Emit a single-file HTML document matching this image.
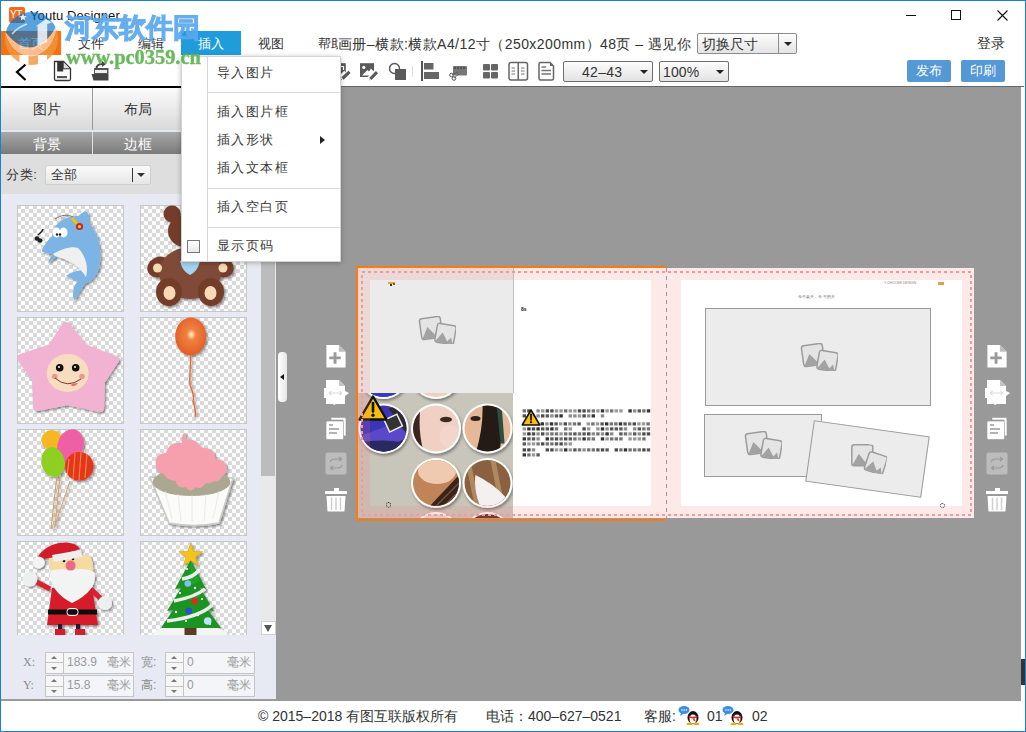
<!DOCTYPE html>
<html><head><meta charset="utf-8">
<style>
*{margin:0;padding:0;box-sizing:border-box}
html,body{width:1026px;height:732px;overflow:hidden;background:#fff}
body{position:relative;font-family:"Liberation Sans",sans-serif;color:#333;font-size:13px}
.a{position:absolute}
.t{position:absolute;white-space:nowrap;line-height:1}
.ck{width:107px;height:107px;border:1px solid #c8c8c8;background:repeating-conic-gradient(#d9d9d9 0 25%,#fff 0 50%) -5px -1px/8px 8px}
.sp{width:19px;height:22px;border:1px solid #c4c4c4;background:linear-gradient(#f6f6f6 0 9.5px,#c4c4c4 9.5px 10.5px,#f6f6f6 10.5px)}
.sp:before{content:"";position:absolute;left:5px;top:3px;border-left:3.5px solid transparent;border-right:3.5px solid transparent;border-bottom:3.5px solid #777}
.sp:after{content:"";position:absolute;left:5px;top:14px;border-left:3.5px solid transparent;border-right:3.5px solid transparent;border-top:3.5px solid #777}
.circ{width:50px;height:50px;border-radius:50%;border:2.5px solid #fff;box-shadow:1px 2px 3px rgba(0,0,0,0.35)}
.tx{color:#000;font-weight:bold;-webkit-text-stroke:0.3px #000;word-break:break-all;overflow:hidden}
.fld{width:71px;height:22px;border:1px solid #c4c4c4;background:#f4f5f8}
</style></head><body>

<!-- window border -->
<div class="a" style="left:0;top:0;width:1026px;height:732px;border:1px solid #1c7fd6;z-index:50;pointer-events:none"></div>

<!-- title bar -->
<div class="a" style="left:9px;top:7px;width:16px;height:16px;background:#f26b1d;border-radius:2px"></div>
<div class="t" style="left:10px;top:10px;font-size:10px;color:#fff;letter-spacing:-0.5px">YT</div>
<div class="t" style="left:30px;top:9px;font-size:13px;color:#111;letter-spacing:0.1px">Youtu Designer</div>
<div class="a" style="left:906px;top:15px;width:10px;height:1px;background:#111"></div>
<div class="a" style="left:951px;top:10px;width:10px;height:10px;border:1px solid #111"></div>
<svg class="a" style="left:997px;top:10px" width="11" height="11"><path d="M0.5 0.5L10.5 10.5M10.5 0.5L0.5 10.5" stroke="#111" stroke-width="1.1"/></svg>

<!-- menu tabs -->
<div class="a" style="left:1px;top:31px;width:60px;height:24px;background:#f8700f"></div>
<div class="t" style="left:18px;top:37px;font-size:13px;color:#fff">首页</div>
<div class="t" style="left:78px;top:37px;font-size:13px;color:#333">文件</div>
<div class="t" style="left:138px;top:37px;font-size:13px;color:#333">编辑</div>
<div class="a" style="left:181px;top:31px;width:60px;height:24px;background:#219cdb"></div>
<div class="t" style="left:198px;top:37px;font-size:13px;color:#fff">插入</div>
<div class="t" style="left:258px;top:37px;font-size:13px;color:#333">视图</div>
<div class="t" style="left:318px;top:37px;font-size:13px;color:#333">帮助</div>
<div class="t" style="left:338px;top:37px;font-size:14px;letter-spacing:0.43px;color:#333;background:#fff">画册–横款:横款A4/12寸（250x200mm）48页 – 遇见你</div>

<!-- size dropdown -->
<div class="a" style="left:697px;top:33px;width:100px;height:21px;border:1px solid #8c8c8c;border-radius:2px;background:linear-gradient(#fdfdfd,#e4e4e4)"></div>
<div class="a" style="left:778px;top:34px;width:1px;height:19px;background:#8c8c8c"></div>
<div class="t" style="left:702px;top:37px;font-size:14px;color:#333">切换尺寸</div>
<div class="a" style="left:784px;top:42px;width:0;height:0;border-left:4px solid transparent;border-right:4px solid transparent;border-top:4px solid #222"></div>
<div class="t" style="left:977px;top:36px;font-size:14px;color:#333">登录</div>

<!-- toolbar -->
<div class="a" style="left:907px;top:60px;width:44px;height:22px;background:#5598d6;border-radius:2px"></div>
<div class="t" style="left:916px;top:64px;font-size:13px;color:#fff">发布</div>
<div class="a" style="left:961px;top:60px;width:44px;height:22px;background:#5598d6;border-radius:2px"></div>
<div class="t" style="left:970px;top:64px;font-size:13px;color:#fff">印刷</div>

<svg class="a" style="left:0;top:56px" width="740" height="30">
 <path d="M25.5 8.5 L17 16 L25.5 24" stroke="#000" stroke-width="2.2" fill="none"/>
 <path d="M54.5 5.5 H63.5 L70.5 12.5 V23 Q70.5 24.5 69 24.5 H56 Q54.5 24.5 54.5 23 Z" fill="#fff" stroke="#333" stroke-width="1.3"/>
 <rect x="57.2" y="6" width="6" height="9.5" fill="#333"/><path d="M63.2 6 V12.8 H70 Z" fill="#ddd"/><path d="M63.2 6 V12.8 H70" fill="none" stroke="#333" stroke-width="1"/>
 <rect x="57" y="20" width="10" height="2.2" fill="#555"/>
 <path d="M91.5 18 H108.5 V24.5 H93.5 Z" fill="#444"/><path d="M94 12 H108.5 V18 H94Z" fill="#555"/><path d="M95 14 H107 V17 H95Z" fill="#eee"/>
 <path d="M96.5 13 Q96 8 103 8" stroke="#444" stroke-width="2" fill="none"/><path d="M102 5 L106 8 L102 11Z" fill="#444"/>
 <rect x="341" y="7.2" width="4.8" height="12.5" fill="#5a5a5a"/><path d="M341 10.5 H343.5 V14" stroke="#fff" stroke-width="1.2" fill="none"/>
 <path d="M340.5 22 L346 16.5" stroke="#fff" stroke-width="5"/><path d="M342.5 22.5 L349.5 15.8" stroke="#5a5a5a" stroke-width="3.2"/><path d="M342.2 23.5 L341 24 L341.6 22.6Z" fill="#5a5a5a"/>
 <rect x="360" y="7.2" width="14" height="13.8" fill="#5a5a5a"/><circle cx="363.8" cy="11.4" r="1.6" fill="#fff"/>
 <path d="M362 19.6 L367.5 14 L369 15.5 L371 12.5 L373.6 15.6 V19.6Z" fill="#fff"/>
 <path d="M368 24.5 L377.5 15" stroke="#fff" stroke-width="5.5"/><path d="M370.3 23 L377 16.2" stroke="#5a5a5a" stroke-width="3.2"/><path d="M370 24 L369 24.6 L369.4 23.3Z" fill="#5a5a5a"/>
 <circle cx="394.5" cy="12.5" r="5" fill="none" stroke="#555" stroke-width="1.4"/><rect x="395" y="13" width="11" height="11" fill="#5a5a5a"/>
 <rect x="412" y="10" width="1" height="11" fill="#ddd"/>
 <rect x="421" y="5" width="2" height="20" fill="#555"/><rect x="424" y="7" width="9.5" height="6.5" fill="#666"/><rect x="424" y="16" width="15" height="7" fill="#666"/>
 <rect x="453" y="10" width="14" height="9.5" rx="1" fill="#777"/><path d="M454 12 H466" stroke="#333" stroke-width="1" stroke-dasharray="2 1"/>
 <circle cx="451.5" cy="19" r="1.8" fill="none" stroke="#555" stroke-width="1"/><circle cx="454" cy="22.5" r="1.8" fill="none" stroke="#555" stroke-width="1"/><path d="M452 19 L458 16 M454 22 L459 18" stroke="#555" stroke-width="0.8"/>
 <rect x="483" y="8" width="7" height="6.5" rx="1" fill="#666"/><rect x="491" y="8" width="7" height="6.5" rx="1" fill="#666"/><rect x="483" y="16" width="7" height="6.5" rx="1" fill="#666"/><rect x="491" y="16" width="7" height="6.5" rx="1" fill="#666"/>
 <rect x="509" y="6.5" width="18.5" height="17.5" rx="2" fill="none" stroke="#666" stroke-width="1.5"/><rect x="517.5" y="6.5" width="1.5" height="17.5" fill="#666"/>
 <path d="M511.5 12 H515 M511.5 15 H515 M511.5 18 H515 M521 12 H524.5 M521 15 H524.5 M521 18 H524.5" stroke="#777" stroke-width="1.2"/>
 <path d="M539 8 Q539 6.5 540.5 6.5 H550 L553.5 10 V22.5 Q553.5 24 552 24 H540.5 Q539 24 539 22.5Z" fill="none" stroke="#666" stroke-width="1.5"/><path d="M550 6.5 L553.5 10 H550Z" fill="#666"/>
 <path d="M541.5 11 H546 M541.5 14.5 H551 M541.5 18 H551" stroke="#777" stroke-width="1.3"/>
</svg>
<div class="a" style="left:563px;top:61px;width:90px;height:21px;border:1px solid #6e6e6e;border-radius:2px;background:linear-gradient(#fdfdfd,#e2e2e2)"></div>
<div class="t" style="left:582px;top:65px;font-size:14px;color:#333;letter-spacing:0.3px">42–43</div>
<div class="a" style="left:640px;top:70px;width:0;height:0;border-left:4px solid transparent;border-right:4px solid transparent;border-top:4px solid #222"></div>
<div class="a" style="left:659px;top:61px;width:70px;height:21px;border:1px solid #6e6e6e;border-radius:2px;background:linear-gradient(#fdfdfd,#e2e2e2)"></div>
<div class="t" style="left:663px;top:65px;font-size:14px;color:#333;letter-spacing:0.1px">100%</div>
<div class="a" style="left:716px;top:70px;width:0;height:0;border-left:4px solid transparent;border-right:4px solid transparent;border-top:4px solid #222"></div>

<!-- canvas -->
<div class="a" style="left:276px;top:86px;width:745px;height:615px;background:#999;border-top:1px solid #666"></div>
<div class="a" style="left:1021px;top:87px;width:4px;height:614px;background:#fff"></div>
<div class="a" style="left:1021px;top:86px;width:3px;height:1px;background:#666"></div>
<div class="a" style="left:1021px;top:659px;width:4px;height:26px;background:#333"></div>
<svg width="0" height="0" style="position:absolute">
 <defs>
  <symbol id="ph" viewBox="-20 -14 40 28">
   <g transform="translate(-5,-2) rotate(-8)"><rect x="-10.5" y="-10.5" width="21" height="21" rx="2.5" fill="#e4e4e4" stroke="#9c9c9c" stroke-width="1.5"/><path d="M-10 10 L-3.5 -1.5 L3 7 L5 3 L10 10Z" fill="#a2a2a2"/></g>
   <g transform="translate(9.5,4) rotate(10)"><rect x="-9.5" y="-9.5" width="19" height="19" rx="2.5" fill="#e4e4e4" stroke="#9c9c9c" stroke-width="1.5"/><path d="M-9 9 L-3 -1 L3 7 L6 2.5 L9 9Z" fill="#a2a2a2"/></g>
  </symbol>
  <symbol id="warn" viewBox="0 0 30 26">
   <path d="M15 1.5 L28.5 24.5 L1.5 24.5 Z" fill="#f6bf0a" stroke="#111" stroke-width="2.4" stroke-linejoin="round"/>
   <path d="M15 8 L15 16.5" stroke="#111" stroke-width="2.6" stroke-linecap="round"/>
   <circle cx="15" cy="20.2" r="1.7" fill="#111"/>
  </symbol>
  <symbol id="ic-add" viewBox="0 0 22 25">
   <path d="M1 1 H14 L21 8 V24.5 H1 Z" fill="#fff"/><path d="M14 1 L21 8 H14Z" fill="#bdbdbd"/>
   <path d="M10 8.5 V20.5 M4 14.5 H16" stroke="#999" stroke-width="3"/>
  </symbol>
  <symbol id="ic-move" viewBox="0 0 28 26">
   <path d="M3 1 H16 L22 7 V12 L26 14 L22 17 V25 H13 L11 26 L10 25 H3 V19 H1 V9 H3 Z" fill="#fff"/><path d="M16 1 L22 7 H16Z" fill="#c4c4c4"/>
   <path d="M6 14 H19 M6 14 L8.5 12 M6 14 L8.5 16 M19 14 L16.5 12 M19 14 L16.5 16" stroke="#dcdcdc" stroke-width="1.2"/>
  </symbol>
  <symbol id="ic-copy" viewBox="0 0 22 24">
   <path d="M6 1.5 H19.5 Q21 1.5 21 3 V19 Q21 20 20 20 H18 V4 H6Z" fill="#fff" stroke="#999" stroke-width="0.6"/>
   <rect x="1" y="5" width="17.5" height="18.5" rx="1.5" fill="#fff" stroke="#999" stroke-width="0.6"/>
   <path d="M4 9 H8 M4 13 H14 M4 17 H12" stroke="#9a9a9a" stroke-width="1.4"/>
  </symbol>
  <symbol id="ic-swap" viewBox="0 0 22 23">
   <rect x="0.5" y="0.5" width="21" height="22" rx="2" fill="#bcbcbc"/>
   <path d="M5 10 Q6 7 10 7 H16 M14 5 L16.5 7 L14 9 M17 13 Q16 16 12 16 H6 M8 14 L5.5 16 L8 18" stroke="#999" stroke-width="1.2" fill="none"/>
  </symbol>
  <symbol id="ic-trash" viewBox="0 0 22 24">
   <rect x="9" y="0" width="5" height="3.5" fill="#fff"/><rect x="0" y="3" width="22" height="3" fill="#fff"/>
   <path d="M1.5 8 H20.5 L19.5 23.5 H2.5Z" fill="#fff"/>
   <path d="M6.5 9.5 V22 M11 9.5 V22 M15.5 9.5 V22" stroke="#cfcfcf" stroke-width="1.5"/>
  </symbol>
 </defs>
</svg>
<!-- collapse handle -->
<div class="a" style="left:278px;top:352px;width:9px;height:50px;background:linear-gradient(90deg,#fff,#e6e6e6);border-radius:4px"></div>
<div class="a" style="left:280px;top:374px;width:0;height:0;border-top:3.5px solid transparent;border-bottom:3.5px solid transparent;border-right:4px solid #111"></div>
<!-- side icons -->
<svg class="a" style="left:325px;top:344px" width="22" height="24"><use href="#ic-add"/></svg>
<svg class="a" style="left:323px;top:379px" width="28" height="26"><use href="#ic-move"/></svg>
<svg class="a" style="left:325px;top:416px" width="22" height="24"><use href="#ic-copy"/></svg>
<svg class="a" style="left:325px;top:452px" width="22" height="23"><use href="#ic-swap"/></svg>
<svg class="a" style="left:325px;top:488px" width="22" height="24"><use href="#ic-trash"/></svg>
<svg class="a" style="left:986px;top:344px" width="22" height="24"><use href="#ic-add"/></svg>
<svg class="a" style="left:984px;top:379px" width="28" height="26"><use href="#ic-move"/></svg>
<svg class="a" style="left:986px;top:416px" width="22" height="24"><use href="#ic-copy"/></svg>
<svg class="a" style="left:986px;top:452px" width="22" height="23"><use href="#ic-swap"/></svg>
<svg class="a" style="left:986px;top:488px" width="22" height="24"><use href="#ic-trash"/></svg>

<!-- spread -->
<div class="a" style="left:358px;top:268px;width:616px;height:250px;background:#fff"></div>
<!-- left page content -->
<svg class="a" style="left:358px;top:393px" width="155" height="125"><defs><filter id="csh" x="-30%" y="-30%" width="160%" height="160%"><feDropShadow dx="1" dy="2" stdDeviation="1.6" flood-color="#000" flood-opacity="0.4"/></filter><clipPath id="cc0"><circle cx="25.5" cy="-19" r="23"/></clipPath><clipPath id="cc1"><circle cx="78" cy="-19" r="23"/></clipPath><clipPath id="cc2"><circle cx="25.5" cy="35.5" r="23"/></clipPath><clipPath id="cc3"><circle cx="78" cy="35.5" r="23"/></clipPath><clipPath id="cc4"><circle cx="129.5" cy="35.5" r="23"/></clipPath><clipPath id="cc5"><circle cx="78" cy="90" r="23"/></clipPath><clipPath id="cc6"><circle cx="129.5" cy="90" r="23"/></clipPath><clipPath id="cc7"><circle cx="78" cy="144" r="23"/></clipPath><clipPath id="cc8"><circle cx="129.5" cy="144" r="23"/></clipPath></defs><rect width="155" height="125" fill="#c8c5bb"/><circle cx="25.5" cy="-19" r="25" fill="#fff" filter="url(#csh)"/><circle cx="78" cy="-19" r="25" fill="#fff" filter="url(#csh)"/><circle cx="25.5" cy="35.5" r="25" fill="#fff" filter="url(#csh)"/><circle cx="78" cy="35.5" r="25" fill="#fff" filter="url(#csh)"/><circle cx="129.5" cy="35.5" r="25" fill="#fff" filter="url(#csh)"/><circle cx="78" cy="90" r="25" fill="#fff" filter="url(#csh)"/><circle cx="129.5" cy="90" r="25" fill="#fff" filter="url(#csh)"/><circle cx="78" cy="144" r="25" fill="#fff" filter="url(#csh)"/><circle cx="129.5" cy="144" r="25" fill="#fff" filter="url(#csh)"/><g clip-path="url(#cc0)"><rect x="0.5" y="-44" width="50" height="50" fill="#2a2a70"/><rect x="0.5" y="-9" width="50" height="15" fill="#3a3ab8"/></g><g clip-path="url(#cc1)"><rect x="53" y="-44" width="50" height="50" fill="#ecd0c0"/></g><g clip-path="url(#cc2)"><rect x="0.5" y="10.5" width="50" height="50" fill="#3b35b8"/><path d="M0.5 43.5 L35.5 30.5 L50.5 40.5 V60.5 H0.5Z" fill="#5a48c8"/><path d="M30.5 15.5 L50.5 10.5 V60.5 H20.5 L50.5 43.5Z" fill="#2c2c30"/><rect x="28.5" y="23.5" width="14" height="13" transform="rotate(-25 35.5 30.5)" fill="#333" stroke="#e8e8e8" stroke-width="1.5"/><path d="M0.5 49.5 Q25.5 45.5 45.5 49.5 V60.5 H0.5Z" fill="#2a2a60"/></g><g clip-path="url(#cc3)"><rect x="53" y="10.5" width="50" height="50" fill="#f0d0c2"/><path d="M53 10.5 H63 Q59 35.5 66 60.5 H53Z" fill="#3a2820"/><ellipse cx="88" cy="26.5" rx="6" ry="2.8" fill="#3a2a22"/><ellipse cx="92" cy="43.5" rx="10" ry="12" fill="#f4dad0" opacity="0.6"/></g><g clip-path="url(#cc4)"><rect x="104.5" y="10.5" width="50" height="50" fill="#e6b898"/><ellipse cx="117.5" cy="25.5" rx="5" ry="2.5" fill="#2a2220"/><path d="M124.5 10.5 H141.5 Q145.5 35.5 141.5 60.5 H117.5 Q125.5 35.5 124.5 10.5Z" fill="#241a16"/><path d="M138.5 10.5 H143.5 L146.5 50.5 H142.5Z" fill="#2a5040"/></g><g clip-path="url(#cc5)"><rect x="53" y="65" width="50" height="50" fill="#c08458"/><path d="M70 115 L103 80 V115Z" fill="#3a2418"/><path d="M76 115 L103 88 M84 115 L103 96" stroke="#7a5a48" stroke-width="1.2"/><ellipse cx="79" cy="78" rx="19" ry="13" fill="#f0cab0"/></g><g clip-path="url(#cc6)"><rect x="104.5" y="65" width="50" height="50" fill="#8a6040"/><path d="M109.5 65 L119.5 115 M134.5 65 L144.5 115" stroke="#b08860" stroke-width="5"/><path d="M117.5 82 Q134.5 90 147.5 104 Q139.5 116 121.5 112 Q115.5 95 117.5 82Z" fill="#f4f0f0"/></g><g clip-path="url(#cc7)"><rect x="53" y="119" width="50" height="50" fill="#e8d4d0"/></g><g clip-path="url(#cc8)"><rect x="104.5" y="119" width="50" height="50" fill="#5a3028"/></g></svg>
</div>
<div class="a" style="left:358px;top:268px;width:156px;height:125px;background:#ebebeb;border-right:1px solid #c4c4c4"></div>
<svg class="a" style="left:416px;top:316px" width="40" height="28"><use href="#ph"/></svg>
<svg class="a" style="left:358px;top:395px" width="30" height="26"><use href="#warn"/></svg>
<!-- right page placeholders -->
<div class="a" style="left:705px;top:308px;width:226px;height:98px;background:#ececec;border:1px solid #9a9a9a"></div>
<svg class="a" style="left:798px;top:343px" width="40" height="28"><use href="#ph"/></svg>
<div class="a" style="left:704px;top:414px;width:118px;height:63px;background:#ececec;border:1px solid #9a9a9a"></div>
<svg class="a" style="left:742px;top:431px" width="40" height="28"><use href="#ph"/></svg>
<div class="a" style="left:809px;top:427.5px;width:117px;height:62px;background:#ececec;border:1px solid #9a9a9a;transform:rotate(8deg)"></div>
<svg class="a" style="left:847px;top:444px;transform:rotate(8deg)" width="40" height="28"><use href="#ph"/></svg>
<!-- page texts -->
<div class="a" style="left:388px;top:282px;width:7px;height:1.5px;background:#e8a040"></div>
<div class="a" style="left:390px;top:284px;width:1.5px;height:1.5px;background:#333"></div><div class="a" style="left:393px;top:283px;width:2px;height:2px;background:#8a5a20"></div>
<div class="t" style="left:521px;top:307px;font-size:5px;font-weight:bold;color:#111">8s</div>
<svg class="a" style="left:522px;top:409px" width="130" height="50"><rect x="0.6" y="0.3" width="3.4" height="3.2" fill="#000" opacity="0.55"/><rect x="5.2" y="0.3" width="3.4" height="3.2" fill="#000" opacity="0.7"/><rect x="14.4" y="0.3" width="3.4" height="3.2" fill="#000" opacity="0.45"/><rect x="19.0" y="0.3" width="3.4" height="3.2" fill="#000" opacity="0.4"/><rect x="23.6" y="0.3" width="3.4" height="3.2" fill="#000" opacity="0.7"/><rect x="28.2" y="0.3" width="3.4" height="3.2" fill="#000" opacity="0.7"/><rect x="32.8" y="0.3" width="3.4" height="3.2" fill="#000" opacity="0.4"/><rect x="37.4" y="0.3" width="3.4" height="3.2" fill="#000" opacity="0.4"/><rect x="42.0" y="0.3" width="3.4" height="3.2" fill="#000" opacity="0.55"/><rect x="46.6" y="0.3" width="3.4" height="3.2" fill="#000" opacity="0.4"/><rect x="51.2" y="0.3" width="3.4" height="3.2" fill="#000" opacity="0.4"/><rect x="55.8" y="0.3" width="3.4" height="3.2" fill="#000" opacity="0.7"/><rect x="60.4" y="0.3" width="3.4" height="3.2" fill="#000" opacity="0.7"/><rect x="65.0" y="0.3" width="3.4" height="3.2" fill="#000" opacity="0.55"/><rect x="69.6" y="0.3" width="3.4" height="3.2" fill="#000" opacity="0.55"/><rect x="74.2" y="0.3" width="3.4" height="3.2" fill="#000" opacity="0.4"/><rect x="78.8" y="0.3" width="3.4" height="3.2" fill="#000" opacity="0.8"/><rect x="83.4" y="0.3" width="3.4" height="3.2" fill="#000" opacity="0.4"/><rect x="88.0" y="0.3" width="3.4" height="3.2" fill="#000" opacity="0.55"/><rect x="92.6" y="0.3" width="3.4" height="3.2" fill="#000" opacity="0.4"/><rect x="97.2" y="0.3" width="3.4" height="3.2" fill="#000" opacity="0.4"/><rect x="106.4" y="0.3" width="3.4" height="3.2" fill="#000" opacity="0.8"/><rect x="111.0" y="0.3" width="3.4" height="3.2" fill="#000" opacity="0.45"/><rect x="115.6" y="0.3" width="3.4" height="3.2" fill="#000" opacity="0.65"/><rect x="120.2" y="0.3" width="3.4" height="3.2" fill="#000" opacity="0.55"/><rect x="124.8" y="0.3" width="3.4" height="3.2" fill="#000" opacity="0.8"/><rect x="0.6" y="5.3" width="3.4" height="3.2" fill="#000" opacity="0.7"/><rect x="5.2" y="5.3" width="3.4" height="3.2" fill="#000" opacity="0.4"/><rect x="9.8" y="5.3" width="3.4" height="3.2" fill="#000" opacity="0.45"/><rect x="14.4" y="5.3" width="3.4" height="3.2" fill="#000" opacity="0.45"/><rect x="19.0" y="5.3" width="3.4" height="3.2" fill="#000" opacity="0.7"/><rect x="23.6" y="5.3" width="3.4" height="3.2" fill="#000" opacity="0.65"/><rect x="28.2" y="5.3" width="3.4" height="3.2" fill="#000" opacity="0.45"/><rect x="32.8" y="5.3" width="3.4" height="3.2" fill="#000" opacity="0.65"/><rect x="37.4" y="5.3" width="3.4" height="3.2" fill="#000" opacity="0.8"/><rect x="46.6" y="5.3" width="3.4" height="3.2" fill="#000" opacity="0.45"/><rect x="51.2" y="5.3" width="3.4" height="3.2" fill="#000" opacity="0.45"/><rect x="55.8" y="5.3" width="3.4" height="3.2" fill="#000" opacity="0.4"/><rect x="60.4" y="5.3" width="3.4" height="3.2" fill="#000" opacity="0.7"/><rect x="65.0" y="5.3" width="3.4" height="3.2" fill="#000" opacity="0.45"/><rect x="69.6" y="5.3" width="3.4" height="3.2" fill="#000" opacity="0.8"/><rect x="78.8" y="5.3" width="3.4" height="3.2" fill="#000" opacity="0.45"/><rect x="18.6" y="13.3" width="3.4" height="3.2" fill="#000" opacity="0.8"/><rect x="23.2" y="13.3" width="3.4" height="3.2" fill="#000" opacity="0.45"/><rect x="27.8" y="13.3" width="3.4" height="3.2" fill="#000" opacity="0.8"/><rect x="32.4" y="13.3" width="3.4" height="3.2" fill="#000" opacity="0.65"/><rect x="37.0" y="13.3" width="3.4" height="3.2" fill="#000" opacity="0.4"/><rect x="41.6" y="13.3" width="3.4" height="3.2" fill="#000" opacity="0.7"/><rect x="46.2" y="13.3" width="3.4" height="3.2" fill="#000" opacity="0.45"/><rect x="50.8" y="13.3" width="3.4" height="3.2" fill="#000" opacity="0.55"/><rect x="55.4" y="13.3" width="3.4" height="3.2" fill="#000" opacity="0.65"/><rect x="64.6" y="13.3" width="3.4" height="3.2" fill="#000" opacity="0.4"/><rect x="69.2" y="13.3" width="3.4" height="3.2" fill="#000" opacity="0.55"/><rect x="73.8" y="13.3" width="3.4" height="3.2" fill="#000" opacity="0.4"/><rect x="78.4" y="13.3" width="3.4" height="3.2" fill="#000" opacity="0.65"/><rect x="83.0" y="13.3" width="3.4" height="3.2" fill="#000" opacity="0.8"/><rect x="87.6" y="13.3" width="3.4" height="3.2" fill="#000" opacity="0.55"/><rect x="92.2" y="13.3" width="3.4" height="3.2" fill="#000" opacity="0.55"/><rect x="96.8" y="13.3" width="3.4" height="3.2" fill="#000" opacity="0.8"/><rect x="101.4" y="13.3" width="3.4" height="3.2" fill="#000" opacity="0.65"/><rect x="106.0" y="13.3" width="3.4" height="3.2" fill="#000" opacity="0.55"/><rect x="110.6" y="13.3" width="3.4" height="3.2" fill="#000" opacity="0.7"/><rect x="115.2" y="13.3" width="3.4" height="3.2" fill="#000" opacity="0.4"/><rect x="119.8" y="13.3" width="3.4" height="3.2" fill="#000" opacity="0.4"/><rect x="124.4" y="13.3" width="3.4" height="3.2" fill="#000" opacity="0.55"/><rect x="0.6" y="18.3" width="3.4" height="3.2" fill="#000" opacity="0.4"/><rect x="5.2" y="18.3" width="3.4" height="3.2" fill="#000" opacity="0.8"/><rect x="9.8" y="18.3" width="3.4" height="3.2" fill="#000" opacity="0.7"/><rect x="14.4" y="18.3" width="3.4" height="3.2" fill="#000" opacity="0.8"/><rect x="19.0" y="18.3" width="3.4" height="3.2" fill="#000" opacity="0.65"/><rect x="23.6" y="18.3" width="3.4" height="3.2" fill="#000" opacity="0.65"/><rect x="28.2" y="18.3" width="3.4" height="3.2" fill="#000" opacity="0.8"/><rect x="32.8" y="18.3" width="3.4" height="3.2" fill="#000" opacity="0.55"/><rect x="42.0" y="18.3" width="3.4" height="3.2" fill="#000" opacity="0.55"/><rect x="46.6" y="18.3" width="3.4" height="3.2" fill="#000" opacity="0.4"/><rect x="60.4" y="18.3" width="3.4" height="3.2" fill="#000" opacity="0.7"/><rect x="65.0" y="18.3" width="3.4" height="3.2" fill="#000" opacity="0.4"/><rect x="74.2" y="18.3" width="3.4" height="3.2" fill="#000" opacity="0.4"/><rect x="78.8" y="18.3" width="3.4" height="3.2" fill="#000" opacity="0.8"/><rect x="83.4" y="18.3" width="3.4" height="3.2" fill="#000" opacity="0.45"/><rect x="88.0" y="18.3" width="3.4" height="3.2" fill="#000" opacity="0.65"/><rect x="92.6" y="18.3" width="3.4" height="3.2" fill="#000" opacity="0.65"/><rect x="97.2" y="18.3" width="3.4" height="3.2" fill="#000" opacity="0.65"/><rect x="101.8" y="18.3" width="3.4" height="3.2" fill="#000" opacity="0.45"/><rect x="111.0" y="18.3" width="3.4" height="3.2" fill="#000" opacity="0.45"/><rect x="115.6" y="18.3" width="3.4" height="3.2" fill="#000" opacity="0.65"/><rect x="120.2" y="18.3" width="3.4" height="3.2" fill="#000" opacity="0.55"/><rect x="124.8" y="18.3" width="3.4" height="3.2" fill="#000" opacity="0.55"/><rect x="0.6" y="23.3" width="3.4" height="3.2" fill="#000" opacity="0.4"/><rect x="5.2" y="23.3" width="3.4" height="3.2" fill="#000" opacity="0.8"/><rect x="9.8" y="23.3" width="3.4" height="3.2" fill="#000" opacity="0.7"/><rect x="14.4" y="23.3" width="3.4" height="3.2" fill="#000" opacity="0.45"/><rect x="19.0" y="23.3" width="3.4" height="3.2" fill="#000" opacity="0.7"/><rect x="23.6" y="23.3" width="3.4" height="3.2" fill="#000" opacity="0.45"/><rect x="28.2" y="23.3" width="3.4" height="3.2" fill="#000" opacity="0.55"/><rect x="32.8" y="23.3" width="3.4" height="3.2" fill="#000" opacity="0.55"/><rect x="37.4" y="23.3" width="3.4" height="3.2" fill="#000" opacity="0.4"/><rect x="42.0" y="23.3" width="3.4" height="3.2" fill="#000" opacity="0.55"/><rect x="46.6" y="23.3" width="3.4" height="3.2" fill="#000" opacity="0.55"/><rect x="51.2" y="23.3" width="3.4" height="3.2" fill="#000" opacity="0.65"/><rect x="55.8" y="23.3" width="3.4" height="3.2" fill="#000" opacity="0.55"/><rect x="60.4" y="23.3" width="3.4" height="3.2" fill="#000" opacity="0.65"/><rect x="65.0" y="23.3" width="3.4" height="3.2" fill="#000" opacity="0.7"/><rect x="69.6" y="23.3" width="3.4" height="3.2" fill="#000" opacity="0.45"/><rect x="74.2" y="23.3" width="3.4" height="3.2" fill="#000" opacity="0.55"/><rect x="78.8" y="23.3" width="3.4" height="3.2" fill="#000" opacity="0.45"/><rect x="83.4" y="23.3" width="3.4" height="3.2" fill="#000" opacity="0.8"/><rect x="88.0" y="23.3" width="3.4" height="3.2" fill="#000" opacity="0.45"/><rect x="97.2" y="23.3" width="3.4" height="3.2" fill="#000" opacity="0.65"/><rect x="101.8" y="23.3" width="3.4" height="3.2" fill="#000" opacity="0.55"/><rect x="106.4" y="23.3" width="3.4" height="3.2" fill="#000" opacity="0.4"/><rect x="111.0" y="23.3" width="3.4" height="3.2" fill="#000" opacity="0.65"/><rect x="115.6" y="23.3" width="3.4" height="3.2" fill="#000" opacity="0.45"/><rect x="120.2" y="23.3" width="3.4" height="3.2" fill="#000" opacity="0.7"/><rect x="124.8" y="23.3" width="3.4" height="3.2" fill="#000" opacity="0.7"/><rect x="0.6" y="28.3" width="3.4" height="3.2" fill="#000" opacity="0.8"/><rect x="5.2" y="28.3" width="3.4" height="3.2" fill="#000" opacity="0.65"/><rect x="9.8" y="28.3" width="3.4" height="3.2" fill="#000" opacity="0.65"/><rect x="14.4" y="28.3" width="3.4" height="3.2" fill="#000" opacity="0.45"/><rect x="23.6" y="28.3" width="3.4" height="3.2" fill="#000" opacity="0.8"/><rect x="28.2" y="28.3" width="3.4" height="3.2" fill="#000" opacity="0.65"/><rect x="32.8" y="28.3" width="3.4" height="3.2" fill="#000" opacity="0.7"/><rect x="37.4" y="28.3" width="3.4" height="3.2" fill="#000" opacity="0.55"/><rect x="42.0" y="28.3" width="3.4" height="3.2" fill="#000" opacity="0.7"/><rect x="46.6" y="28.3" width="3.4" height="3.2" fill="#000" opacity="0.65"/><rect x="51.2" y="28.3" width="3.4" height="3.2" fill="#000" opacity="0.55"/><rect x="55.8" y="28.3" width="3.4" height="3.2" fill="#000" opacity="0.4"/><rect x="60.4" y="28.3" width="3.4" height="3.2" fill="#000" opacity="0.8"/><rect x="65.0" y="28.3" width="3.4" height="3.2" fill="#000" opacity="0.55"/><rect x="69.6" y="28.3" width="3.4" height="3.2" fill="#000" opacity="0.55"/><rect x="78.8" y="28.3" width="3.4" height="3.2" fill="#000" opacity="0.8"/><rect x="83.4" y="28.3" width="3.4" height="3.2" fill="#000" opacity="0.4"/><rect x="88.0" y="28.3" width="3.4" height="3.2" fill="#000" opacity="0.55"/><rect x="92.6" y="28.3" width="3.4" height="3.2" fill="#000" opacity="0.55"/><rect x="97.2" y="28.3" width="3.4" height="3.2" fill="#000" opacity="0.55"/><rect x="106.4" y="28.3" width="3.4" height="3.2" fill="#000" opacity="0.4"/><rect x="111.0" y="28.3" width="3.4" height="3.2" fill="#000" opacity="0.4"/><rect x="115.6" y="28.3" width="3.4" height="3.2" fill="#000" opacity="0.4"/><rect x="120.2" y="28.3" width="3.4" height="3.2" fill="#000" opacity="0.55"/><rect x="0.6" y="33.3" width="3.4" height="3.2" fill="#000" opacity="0.65"/><rect x="5.2" y="33.3" width="3.4" height="3.2" fill="#000" opacity="0.4"/><rect x="9.8" y="33.3" width="3.4" height="3.2" fill="#000" opacity="0.4"/><rect x="14.4" y="33.3" width="3.4" height="3.2" fill="#000" opacity="0.55"/><rect x="19.0" y="33.3" width="3.4" height="3.2" fill="#000" opacity="0.7"/><rect x="23.6" y="33.3" width="3.4" height="3.2" fill="#000" opacity="0.55"/><rect x="28.2" y="33.3" width="3.4" height="3.2" fill="#000" opacity="0.55"/><rect x="32.8" y="33.3" width="3.4" height="3.2" fill="#000" opacity="0.65"/><rect x="37.4" y="33.3" width="3.4" height="3.2" fill="#000" opacity="0.7"/><rect x="42.0" y="33.3" width="3.4" height="3.2" fill="#000" opacity="0.45"/><rect x="46.6" y="33.3" width="3.4" height="3.2" fill="#000" opacity="0.4"/><rect x="0.6" y="39.3" width="3.4" height="3.2" fill="#000" opacity="0.7"/><rect x="5.2" y="39.3" width="3.4" height="3.2" fill="#000" opacity="0.7"/><rect x="9.8" y="39.3" width="3.4" height="3.2" fill="#000" opacity="0.45"/><rect x="23.6" y="39.3" width="3.4" height="3.2" fill="#000" opacity="0.7"/><rect x="28.2" y="39.3" width="3.4" height="3.2" fill="#000" opacity="0.7"/><rect x="32.8" y="39.3" width="3.4" height="3.2" fill="#000" opacity="0.4"/><rect x="37.4" y="39.3" width="3.4" height="3.2" fill="#000" opacity="0.4"/><rect x="42.0" y="39.3" width="3.4" height="3.2" fill="#000" opacity="0.8"/><rect x="46.6" y="39.3" width="3.4" height="3.2" fill="#000" opacity="0.4"/><rect x="51.2" y="39.3" width="3.4" height="3.2" fill="#000" opacity="0.65"/><rect x="55.8" y="39.3" width="3.4" height="3.2" fill="#000" opacity="0.55"/><rect x="60.4" y="39.3" width="3.4" height="3.2" fill="#000" opacity="0.45"/><rect x="65.0" y="39.3" width="3.4" height="3.2" fill="#000" opacity="0.55"/><rect x="69.6" y="39.3" width="3.4" height="3.2" fill="#000" opacity="0.55"/><rect x="74.2" y="39.3" width="3.4" height="3.2" fill="#000" opacity="0.65"/><rect x="78.8" y="39.3" width="3.4" height="3.2" fill="#000" opacity="0.7"/><rect x="83.4" y="39.3" width="3.4" height="3.2" fill="#000" opacity="0.65"/><rect x="92.6" y="39.3" width="3.4" height="3.2" fill="#000" opacity="0.7"/><rect x="97.2" y="39.3" width="3.4" height="3.2" fill="#000" opacity="0.55"/><rect x="101.8" y="39.3" width="3.4" height="3.2" fill="#000" opacity="0.8"/><rect x="106.4" y="39.3" width="3.4" height="3.2" fill="#000" opacity="0.55"/><rect x="111.0" y="39.3" width="3.4" height="3.2" fill="#000" opacity="0.55"/><rect x="115.6" y="39.3" width="3.4" height="3.2" fill="#000" opacity="0.55"/><rect x="120.2" y="39.3" width="3.4" height="3.2" fill="#000" opacity="0.7"/><rect x="124.8" y="39.3" width="3.4" height="3.2" fill="#000" opacity="0.65"/><rect x="0.6" y="44.3" width="3.4" height="3.2" fill="#000" opacity="0.8"/><rect x="5.2" y="44.3" width="3.4" height="3.2" fill="#000" opacity="0.55"/><rect x="9.8" y="44.3" width="3.4" height="3.2" fill="#000" opacity="0.4"/><rect x="14.4" y="44.3" width="3.4" height="3.2" fill="#000" opacity="0.65"/></svg>
<svg class="a" style="left:521px;top:409px" width="20" height="17" viewBox="0 0 30 26"><use href="#warn"/></svg>
<div class="t" style="left:882px;top:281.5px;font-size:3.6px;color:#888;letter-spacing:-0.1px">· Y-CHOOSE DESIGN</div>
<div class="a" style="left:938px;top:282px;width:6px;height:3px;background:#d8a050"></div>
<div class="t" style="left:798px;top:294.5px;font-size:4.4px;color:#666;letter-spacing:0.1px">今年夏天，今年的天</div>
<div class="a" style="left:940px;top:503px;width:5px;height:5px;border:1px dotted #333;border-radius:50%"></div>
<div class="a" style="left:386px;top:502px;width:5px;height:6px;border:1px dotted #333;border-radius:50%"></div>
<!-- bleed overlays -->
<div class="a" style="left:358px;top:268px;width:308px;height:250px;border-style:solid;border-color:rgba(250,120,120,0.16);border-width:12px 15px 12px 12px"></div>
<div class="a" style="left:666px;top:268px;width:308px;height:250px;border-style:solid;border-color:rgba(250,120,120,0.16);border-width:12px 12px 12px 15px"></div>
<svg class="a" style="left:356px;top:266px" width="620" height="256">
 <rect x="6" y="6" width="609" height="243" fill="none" stroke="#f29a9a" stroke-width="2" stroke-dasharray="3 3"/>
 <path d="M310.5 2 V252" stroke="#9a9a9a" stroke-width="1" stroke-dasharray="4 4"/>
 <path d="M1 0 V255 M0 1 H310 M0 254 H310" stroke="#ff7a0a" stroke-width="2"/>
</svg>

<!-- left panel -->
<div class="a" style="left:1px;top:86px;width:275px;height:2px;background:#000"></div>
<div class="a" style="left:1px;top:88px;width:275px;height:612px;background:#e7eaf2"></div>
<div class="a" style="left:1px;top:88px;width:275px;height:42px;background:linear-gradient(#fbfbfb,#d9d9d9)"></div>
<div class="a" style="left:92px;top:88px;width:1px;height:42px;background:#9a9a9a"></div>
<div class="a" style="left:1px;top:130px;width:275px;height:2px;background:#e4e7ef"></div>
<div class="a" style="left:1px;top:132px;width:275px;height:22px;background:linear-gradient(#a8a8a8,#7a7a7a)"></div>
<div class="a" style="left:92px;top:132px;width:1px;height:22px;background:#e0e0e0"></div>
<div class="t" style="left:33px;top:102px;font-size:14px;color:#333">图片</div>
<div class="t" style="left:124px;top:102px;font-size:14px;color:#333">布局</div>
<div class="t" style="left:33px;top:137px;font-size:14px;color:#fff">背景</div>
<div class="t" style="left:124px;top:137px;font-size:14px;color:#fff">边框</div>
<div class="a" style="left:1px;top:154px;width:275px;height:40px;background:#dedede"></div>
<div class="t" style="left:6px;top:168px;font-size:13px;color:#333;letter-spacing:0.6px">分类:</div>
<div class="a" style="left:45px;top:165px;width:106px;height:20px;border:1px solid #cfcfcf;border-radius:2px;background:linear-gradient(#fafafa,#e6e6e6)"></div>
<div class="t" style="left:51px;top:168px;font-size:13px;color:#333">全部</div>
<div class="a" style="left:132px;top:168px;width:1px;height:14px;background:#333"></div>
<div class="a" style="left:137px;top:173px;width:0;height:0;border-left:4px solid transparent;border-right:4px solid transparent;border-top:4px solid #333"></div>
<!-- thumbnails -->
<div class="a" style="left:1px;top:194px;width:260px;height:441px;overflow:hidden">
 <div class="a ck" style="left:16px;top:11px"></div>
 <div class="a ck" style="left:139px;top:11px"></div>
 <div class="a ck" style="left:16px;top:123px"></div>
 <div class="a ck" style="left:139px;top:123px"></div>
 <div class="a ck" style="left:16px;top:235px"></div>
 <div class="a ck" style="left:139px;top:235px"></div>
 <div class="a ck" style="left:16px;top:347px"></div>
 <div class="a ck" style="left:139px;top:347px"></div>
 <svg class="a" style="left:16px;top:11px" width="106" height="106" viewBox="0 0 106 106">
  <defs><filter id="sh" x="-20%" y="-20%" width="140%" height="140%"><feDropShadow dx="1.5" dy="1.5" stdDeviation="1.2" flood-color="#000" flood-opacity="0.45"/></filter></defs>
  <g filter="url(#sh)">
  <path d="M25 45 C27 40 31 35 35 31 C36 19 47 11 61 11 L68 6 C72 8 73 12 71 16 C80 26 85 42 83 58 C82 69 76 76 68 79 L57 96 C55 88 56 81 61 76 L49 71 C54 67 60 66 65 65 C60 56 52 51 44 49 L31 58 C32 54 34 51 36 49 C32 49 27 48 25 46 Z" fill="#7db4e6"/>
  <path d="M36 49 C45 44 55 41 61 43 C68 50 72 61 69 72 C63 62 53 55 38 51 Z" fill="#f0f0f0"/>
  <ellipse cx="39.5" cy="27.5" rx="4" ry="5" fill="#fff"/><ellipse cx="46.5" cy="27.5" rx="4" ry="5" fill="#fff"/>
  <circle cx="40" cy="29.5" r="1.2" fill="#222"/><circle cx="43" cy="29.5" r="1.2" fill="#222"/>
  <path d="M38 14 C44 10 50 9 56 12" stroke="#777" stroke-width="1" fill="none"/>
  <path d="M55 13 L61 20" stroke="#f2c300" stroke-width="3"/>
  <circle cx="62.5" cy="21.5" r="3.6" fill="#c9261c"/><circle cx="62.5" cy="21.5" r="1.6" fill="#f2d34a"/>
  </g>
  <path d="M21 30 C23 28 26 26 26 24 M20 32 a1.8 1.5 0 1 0 0.1 0 M23 34 a1.8 1.5 0 1 0 0.1 0" stroke="#222" stroke-width="1.4" fill="#222"/>
 </svg>
 <svg class="a" style="left:139px;top:11px" width="106" height="106" viewBox="0 0 106 106">
  <g filter="url(#sh)">
  <circle cx="32" cy="9" r="8.5" fill="#733d2b"/>
  <ellipse cx="45" cy="26" rx="17" ry="16" fill="#733d2b"/>
  <ellipse cx="19" cy="62" rx="12" ry="10" fill="#733d2b" transform="rotate(-25 19 62)"/>
  <ellipse cx="82" cy="62" rx="12" ry="10" fill="#733d2b" transform="rotate(25 82 62)"/>
  <ellipse cx="50" cy="68" rx="31" ry="26" fill="#7f4b38"/>
  <path d="M40 56 Q50 52 60 56 Q58 66 50 70 Q42 66 40 56Z" fill="#a5d4f0"/>
  <ellipse cx="29" cy="87" rx="13" ry="14" fill="#733d2b"/><ellipse cx="71" cy="87" rx="13" ry="14" fill="#733d2b"/>
  <ellipse cx="29.5" cy="88" rx="6" ry="7" fill="#f7d9b6"/><ellipse cx="70.5" cy="88" rx="6" ry="7" fill="#f7d9b6"/>
  <circle cx="17.5" cy="63" r="4.5" fill="#f7d9b6"/><circle cx="83" cy="63" r="4.5" fill="#f7d9b6"/>
  </g>
 </svg>
 <svg class="a" style="left:16px;top:123px" width="106" height="106" viewBox="0 0 106 106">
  <g filter="url(#sh)">
  <path d="M49 9 L67 31 L98 43 L84 64 L83 91 L51 84 L20 90 L19 62 L4 41 L34 31 Z" fill="#f2b2d2" stroke="#f2b2d2" stroke-width="8" stroke-linejoin="round"/>
  </g>
  <ellipse cx="50.7" cy="56" rx="21" ry="19" fill="#f8dcc0"/>
  <circle cx="42.7" cy="50.7" r="3.8" fill="#111"/><circle cx="58.7" cy="50.7" r="3.8" fill="#111"/>
  <circle cx="42" cy="50" r="1" fill="#fff"/><circle cx="58" cy="50" r="1" fill="#fff"/>
  <circle cx="37.7" cy="59.5" r="2.8" fill="#e79a8c"/><circle cx="65" cy="59.5" r="2.8" fill="#e79a8c"/>
  <path d="M38 61 Q50 72 64 62" stroke="#6b3b2b" stroke-width="1" fill="none"/>
  <path d="M53 68 Q58 71 61 66 Q57 66 53 68Z" fill="#e8686c"/>
 </svg>
 <svg class="a" style="left:139px;top:123px" width="106" height="106" viewBox="0 0 106 106">
  <defs><radialGradient id="bg1" cx="0.52" cy="0.45" r="0.6"><stop offset="0" stop-color="#fff3c8"/><stop offset="0.25" stop-color="#f08040"/><stop offset="1" stop-color="#e05a22"/></radialGradient></defs>
  <g filter="url(#sh)">
  <ellipse cx="50.7" cy="19.5" rx="15.5" ry="19" fill="url(#bg1)"/>
  <path d="M50.5 38 C51 50 49 60 50 68 C52 74 55 78 53 84 C55 90 56 95 55 100" stroke="#e8652c" stroke-width="1.3" fill="none"/>
  </g>
 </svg>
 <svg class="a" style="left:16px;top:235px" width="106" height="106" viewBox="0 0 106 106">
  <g filter="url(#sh)">
  <path d="M40 46 L34 100 M43 46 L38 98 M53 52 L37 99" stroke="#d7a060" stroke-width="1" fill="none"/>
  <ellipse cx="34.8" cy="11" rx="10.5" ry="10" fill="#f6b722"/>
  <ellipse cx="53.5" cy="17" rx="13" ry="17" fill="#ee5fa6" transform="rotate(15 53.5 17)"/>
  <ellipse cx="36" cy="33" rx="11.5" ry="15" fill="#8ed022" transform="rotate(-10 36 33)"/>
  <circle cx="62.3" cy="37.3" r="14.3" fill="#e6361c"/>
  <path d="M52 30 L50 48 M58 24 L56 51 M64 23 L62 51 M70 25 L68 49" stroke="#f5a24a" stroke-width="0.9"/>
  </g>
 </svg>
 <svg class="a" style="left:139px;top:235px" width="106" height="106" viewBox="0 0 106 106">
  <g filter="url(#sh)">
  <path d="M10 48 L93 49 L79 94 Q54 99 29 94 Z" fill="#fbfbfa" stroke="#c9c9c9" stroke-width="1.5"/>
  <ellipse cx="51.5" cy="53" rx="39" ry="14" fill="#aaa890"/>
  <path d="M44 4 C47 5 46 8 45 10 C55 10 60 15 62 19 C72 18 76 24 75 30 C86 30 88 38 86 44 C80 48 80 54 76 52 C72 52 70 56 66 54 C62 58 60 61 56 58 C52 63 48 62 46 58 C40 60 36 56 36 52 C28 52 26 48 24 45 C18 44 15 40 16 35 C14 28 20 24 26 24 C28 16 34 13 42 14 C41 10 42 6 44 4Z" fill="#f5a0ac"/>
  <path d="M25 62 L32 90 M38 65 L41 92 M52 66 L52 93 M66 65 L64 92 M79 62 L73 90" stroke="#e4e4e4" stroke-width="0.8"/>
  </g>
 </svg>
 <svg class="a" style="left:16px;top:347px" width="106" height="106" viewBox="0 0 106 106">
  <g filter="url(#sh)">
  <path d="M33 48 L14 38" stroke="#d8242f" stroke-width="5"/>
  <path d="M74 48 L87 61" stroke="#d8242f" stroke-width="5"/>
  <path d="M35 47 L75 47 L81 84 L30 84 Z" fill="#d61f2c"/>
  <rect x="31" y="68.5" width="49" height="5" fill="#111"/>
  <rect x="50" y="67.5" width="11" height="7" rx="3" fill="none" stroke="#fff" stroke-width="1"/>
  <rect x="41" y="83" width="4" height="5" fill="#1a1a3a"/><rect x="59" y="83" width="4" height="5" fill="#1a1a3a"/>
  <path d="M38 88 h10 v7 h-10z M58 88 h10 v7 h-10z" fill="#d61f2c"/>
  <path d="M32 17 Q32 30 36 34 L76 34 Q77 20 72 14 Z" fill="#f5dba3"/>
  <path d="M33 30 Q40 27 55 29 Q70 26 78 32 Q80 50 55 62 Q32 50 33 30Z" fill="#f2f4f4"/>
  <circle cx="53.6" cy="24.6" r="5" fill="#ee6a82"/>
  <circle cx="47" cy="20" r="1.3" fill="#111"/><circle cx="56" cy="18" r="1.3" fill="#111"/>
  <path d="M18 20 Q26 5 42 2 Q58 0 63 8 L36 16 Z" fill="#d21f2c"/>
  <path d="M35 14 L64 9 L65 16 L37 21Z" fill="#eeeeee"/>
  <circle cx="21.7" cy="21.5" r="6" fill="#f4f4f4"/>
  <circle cx="13" cy="38" r="7.5" fill="#eef0f0"/>
  <circle cx="88" cy="62" r="7" fill="#eef0f0"/>
  </g>
 </svg>
 <svg class="a" style="left:139px;top:347px" width="106" height="106" viewBox="0 0 106 106">
  <g filter="url(#sh)">
  <path d="M12 94 Q14 85 50 84 Q86 85 88 94Z" fill="#f4f6f2"/>
  <rect x="44.5" y="84" width="12" height="10" fill="#5b3a28"/>
  <path d="M50.7 19 L66 48 L60 47 L74 70 L68 69 L81 87 L21 87 L33 69 L27 70 L41 47 L35 48 Z" fill="#1a9424"/>
  <path d="M50.7 19 L60 40 L50 45 Z M38 55 L62 52 L55 60 Z" fill="#23a82e" opacity="0.7"/>
  <path d="M42 38 Q54 36 58 30 M34 60 Q55 56 65 48 M27 80 Q60 76 72 64" stroke="#ededed" stroke-width="3.5" fill="none"/>
  <g fill="#fff"><circle cx="47" cy="28" r="1"/><circle cx="55" cy="47" r="1.2"/><circle cx="40" cy="52" r="1.1"/><circle cx="62" cy="58" r="1"/><circle cx="36" cy="71" r="1.2"/><circle cx="58" cy="74" r="1.2"/><circle cx="46" cy="80" r="1"/><circle cx="70" cy="83" r="1"/></g>
  <circle cx="47.8" cy="42.5" r="3.3" fill="#7cc0f0"/><circle cx="54.7" cy="60" r="3.3" fill="#e02a22"/><circle cx="48.7" cy="70" r="3.3" fill="#2a4fd6"/><circle cx="67.7" cy="80" r="3.8" fill="#bfe2f8"/>
  <path d="M50.7 2 L53.7 10.5 L62.5 10.7 L55.5 16 L58 24.5 L50.7 19.5 L43.4 24.5 L46 16 L39 10.7 L47.7 10.5Z" fill="#f3c51c" stroke="#d6a510" stroke-width="0.6"/>
  </g>
 </svg>
</div>
<!-- scrollbar -->
<div class="a" style="left:261px;top:194px;width:15px;height:441px;background:#e9e9e9"></div>
<div class="a" style="left:261px;top:194px;width:14px;height:282px;background:#bcbcbc"></div>
<div class="a" style="left:261px;top:621px;width:15px;height:14px;background:#fff;border:1px solid #d0d0d0"></div>
<div class="a" style="left:264px;top:625px;width:0;height:0;border-left:4.5px solid transparent;border-right:4.5px solid transparent;border-top:7px solid #555"></div>
<!-- coords -->
<div class="t" style="left:23px;top:656px;font-size:12px;color:#8a8a8a;font-family:'Liberation Serif',serif">X:</div>
<div class="t" style="left:23px;top:679px;font-size:12px;color:#8a8a8a;font-family:'Liberation Serif',serif">Y:</div>
<div class="t" style="left:141px;top:656px;font-size:12px;color:#8a8a8a">宽:</div>
<div class="t" style="left:141px;top:679px;font-size:12px;color:#8a8a8a">高:</div>
<div class="a sp" style="left:45px;top:652px"></div>
<div class="a fld" style="left:63px;top:652px"></div>
<div class="a sp" style="left:45px;top:675px"></div>
<div class="a fld" style="left:63px;top:675px"></div>
<div class="a sp" style="left:165px;top:652px"></div>
<div class="a fld" style="left:183px;top:652px;width:72px"></div>
<div class="a sp" style="left:165px;top:675px"></div>
<div class="a fld" style="left:183px;top:675px;width:72px"></div>
<div class="t" style="left:67px;top:656px;font-size:12px;color:#999">183.9</div>
<div class="t" style="left:107px;top:656px;font-size:12px;color:#999">毫米</div>
<div class="t" style="left:67px;top:679px;font-size:12px;color:#999">15.8</div>
<div class="t" style="left:107px;top:679px;font-size:12px;color:#999">毫米</div>
<div class="t" style="left:187px;top:656px;font-size:12px;color:#999">0</div>
<div class="t" style="left:227px;top:656px;font-size:12px;color:#999">毫米</div>
<div class="t" style="left:187px;top:679px;font-size:12px;color:#999">0</div>
<div class="t" style="left:227px;top:679px;font-size:12px;color:#999">毫米</div>
<div class="a" style="left:1px;top:699px;width:275px;height:2px;background:#9a9a9a"></div>

<!-- watermark -->
<svg class="a" style="left:0;top:0;z-index:30" width="70" height="75">
 <defs><clipPath id="wc"><circle cx="31.5" cy="38.5" r="26.5"/></clipPath></defs>
 <g clip-path="url(#wc)">
  <path d="M0 0 H70 V22 L58 22 Q50 42 34 47 Q18 50 4 30 L0 30 Z" fill="rgba(0,112,202,0.65)"/>
  <path d="M4 30 Q18 50 34 47 Q50 42 58 22 Q54 52 34 56 Q12 58 4 30 Z" fill="rgba(253,208,172,0.8)"/>
  <path d="M0 30 L4 30 Q12 58 34 56 Q54 52 58 22 L70 22 V75 H0 Z" fill="rgba(240,150,60,0.8)"/>
  <rect x="19.5" y="55" width="9" height="20" fill="#fff"/><rect x="38" y="55" width="9" height="20" fill="#fff"/>
  <path d="M37.6 46 V26 L35.5 26.5 L46 19 L52 22.5 L47.2 24 V42Z" fill="rgba(255,255,255,0.8)"/>
  <path d="M12 34 Q18 27 27 24" stroke="rgba(255,255,255,0.7)" stroke-width="1.5" fill="none"/>
 </g>
 <path d="M23 13.5 l1 2.5 2.6 0.3 -2 1.6 0.6 2.5 -2.2 -1.4 -2.2 1.4 0.6 -2.5 -2 -1.6 2.6 -0.3z" fill="#fff" opacity="0.9"/>
</svg>
<div class="t" style="left:65px;top:15px;font-size:27px;font-weight:bold;font-family:'Liberation Serif',serif;color:#5aa8ee;-webkit-text-stroke:1.1px #5aa8ee;opacity:0.92;z-index:30">河东软件园</div>
<div class="t" style="left:66px;top:47px;font-size:20.4px;font-weight:bold;font-family:'Liberation Serif',serif;color:#62b655;-webkit-text-stroke:0.4px #62b655;opacity:0.95;z-index:30">www.pc0359.cn</div>

<!-- insert menu -->
<div class="a" style="left:181px;top:56px;width:160px;height:206px;background:#fff;border:1px solid #d4d4d4;box-shadow:0 1px 5px rgba(0,0,0,0.28);z-index:20">
 <div class="a" style="left:25px;top:0;width:1px;height:204px;background:#d6d6d6"></div>
 <div class="a" style="left:25px;top:35px;width:133px;height:1px;background:#dcdcdc"></div>
 <div class="a" style="left:25px;top:131px;width:133px;height:1px;background:#dcdcdc"></div>
 <div class="a" style="left:25px;top:170px;width:133px;height:1px;background:#dcdcdc"></div>
 <div class="t" style="left:35px;top:9px;font-size:13px;color:#3a3a3a;letter-spacing:1.4px">导入图片</div>
 <div class="t" style="left:35px;top:48px;font-size:13px;color:#3a3a3a;letter-spacing:1.4px">插入图片框</div>
 <div class="t" style="left:35px;top:76px;font-size:13px;color:#3a3a3a;letter-spacing:1.4px">插入形状</div>
 <div class="t" style="left:35px;top:104px;font-size:13px;color:#3a3a3a;letter-spacing:1.4px">插入文本框</div>
 <div class="t" style="left:35px;top:143px;font-size:13px;color:#3a3a3a;letter-spacing:1.4px">插入空白页</div>
 <div class="t" style="left:35px;top:182px;font-size:13px;color:#3a3a3a;letter-spacing:1.4px">显示页码</div>
 <div class="a" style="left:138px;top:79px;width:0;height:0;border-top:4.5px solid transparent;border-bottom:4.5px solid transparent;border-left:5px solid #222"></div>
 <div class="a" style="left:5px;top:183px;width:13px;height:13px;border:1px solid #777;background:linear-gradient(#fff,#e8e8e8)"></div>
</div>

<!-- footer -->
<div class="a" style="left:1px;top:701px;width:1024px;height:30px;background:#fff"></div>
<div class="t" style="left:258px;top:709px;font-size:14px;color:#333">© 2015–2018 有图互联版权所有</div>
<div class="t" style="left:486px;top:709px;font-size:14px;color:#333">电话：400–627–0521</div>
<div class="t" style="left:644px;top:709px;font-size:14px;color:#333">客服:</div>
<div class="t" style="left:707px;top:709px;font-size:14px;color:#333">01</div>
<svg class="a" style="left:678px;top:705px" width="24" height="20" viewBox="0 0 24 20"><ellipse cx="6" cy="5" rx="5.5" ry="4" fill="#3a8ee6"/><path d="M3 8 L2 11 L6 8.5Z" fill="#3a8ee6"/><circle cx="4" cy="5" r="0.8" fill="#fff"/><circle cx="6.2" cy="5" r="0.8" fill="#fff"/><circle cx="8.4" cy="5" r="0.8" fill="#fff"/><ellipse cx="15" cy="12.5" rx="5.5" ry="6.5" fill="#111"/><ellipse cx="15" cy="14" rx="3.5" ry="4.5" fill="#fff"/><path d="M10.5 10.5 Q15 13 19.5 10.5 L19 12.5 Q15 14.5 11 12.5Z" fill="#e8281c"/><path d="M16 12.5 L18 17 L15 15Z" fill="#e8281c"/><ellipse cx="11.5" cy="19" rx="3" ry="1.3" fill="#f5a800"/><ellipse cx="18.5" cy="19" rx="3" ry="1.3" fill="#f5a800"/></svg>
<svg class="a" style="left:722px;top:705px" width="24" height="20" viewBox="0 0 24 20"><ellipse cx="6" cy="5" rx="5.5" ry="4" fill="#3a8ee6"/><path d="M3 8 L2 11 L6 8.5Z" fill="#3a8ee6"/><circle cx="4" cy="5" r="0.8" fill="#fff"/><circle cx="6.2" cy="5" r="0.8" fill="#fff"/><circle cx="8.4" cy="5" r="0.8" fill="#fff"/><ellipse cx="15" cy="12.5" rx="5.5" ry="6.5" fill="#111"/><ellipse cx="15" cy="14" rx="3.5" ry="4.5" fill="#fff"/><path d="M10.5 10.5 Q15 13 19.5 10.5 L19 12.5 Q15 14.5 11 12.5Z" fill="#e8281c"/><path d="M16 12.5 L18 17 L15 15Z" fill="#e8281c"/><ellipse cx="11.5" cy="19" rx="3" ry="1.3" fill="#f5a800"/><ellipse cx="18.5" cy="19" rx="3" ry="1.3" fill="#f5a800"/></svg>
<div class="t" style="left:752px;top:709px;font-size:14px;color:#333">02</div>

</body></html>
